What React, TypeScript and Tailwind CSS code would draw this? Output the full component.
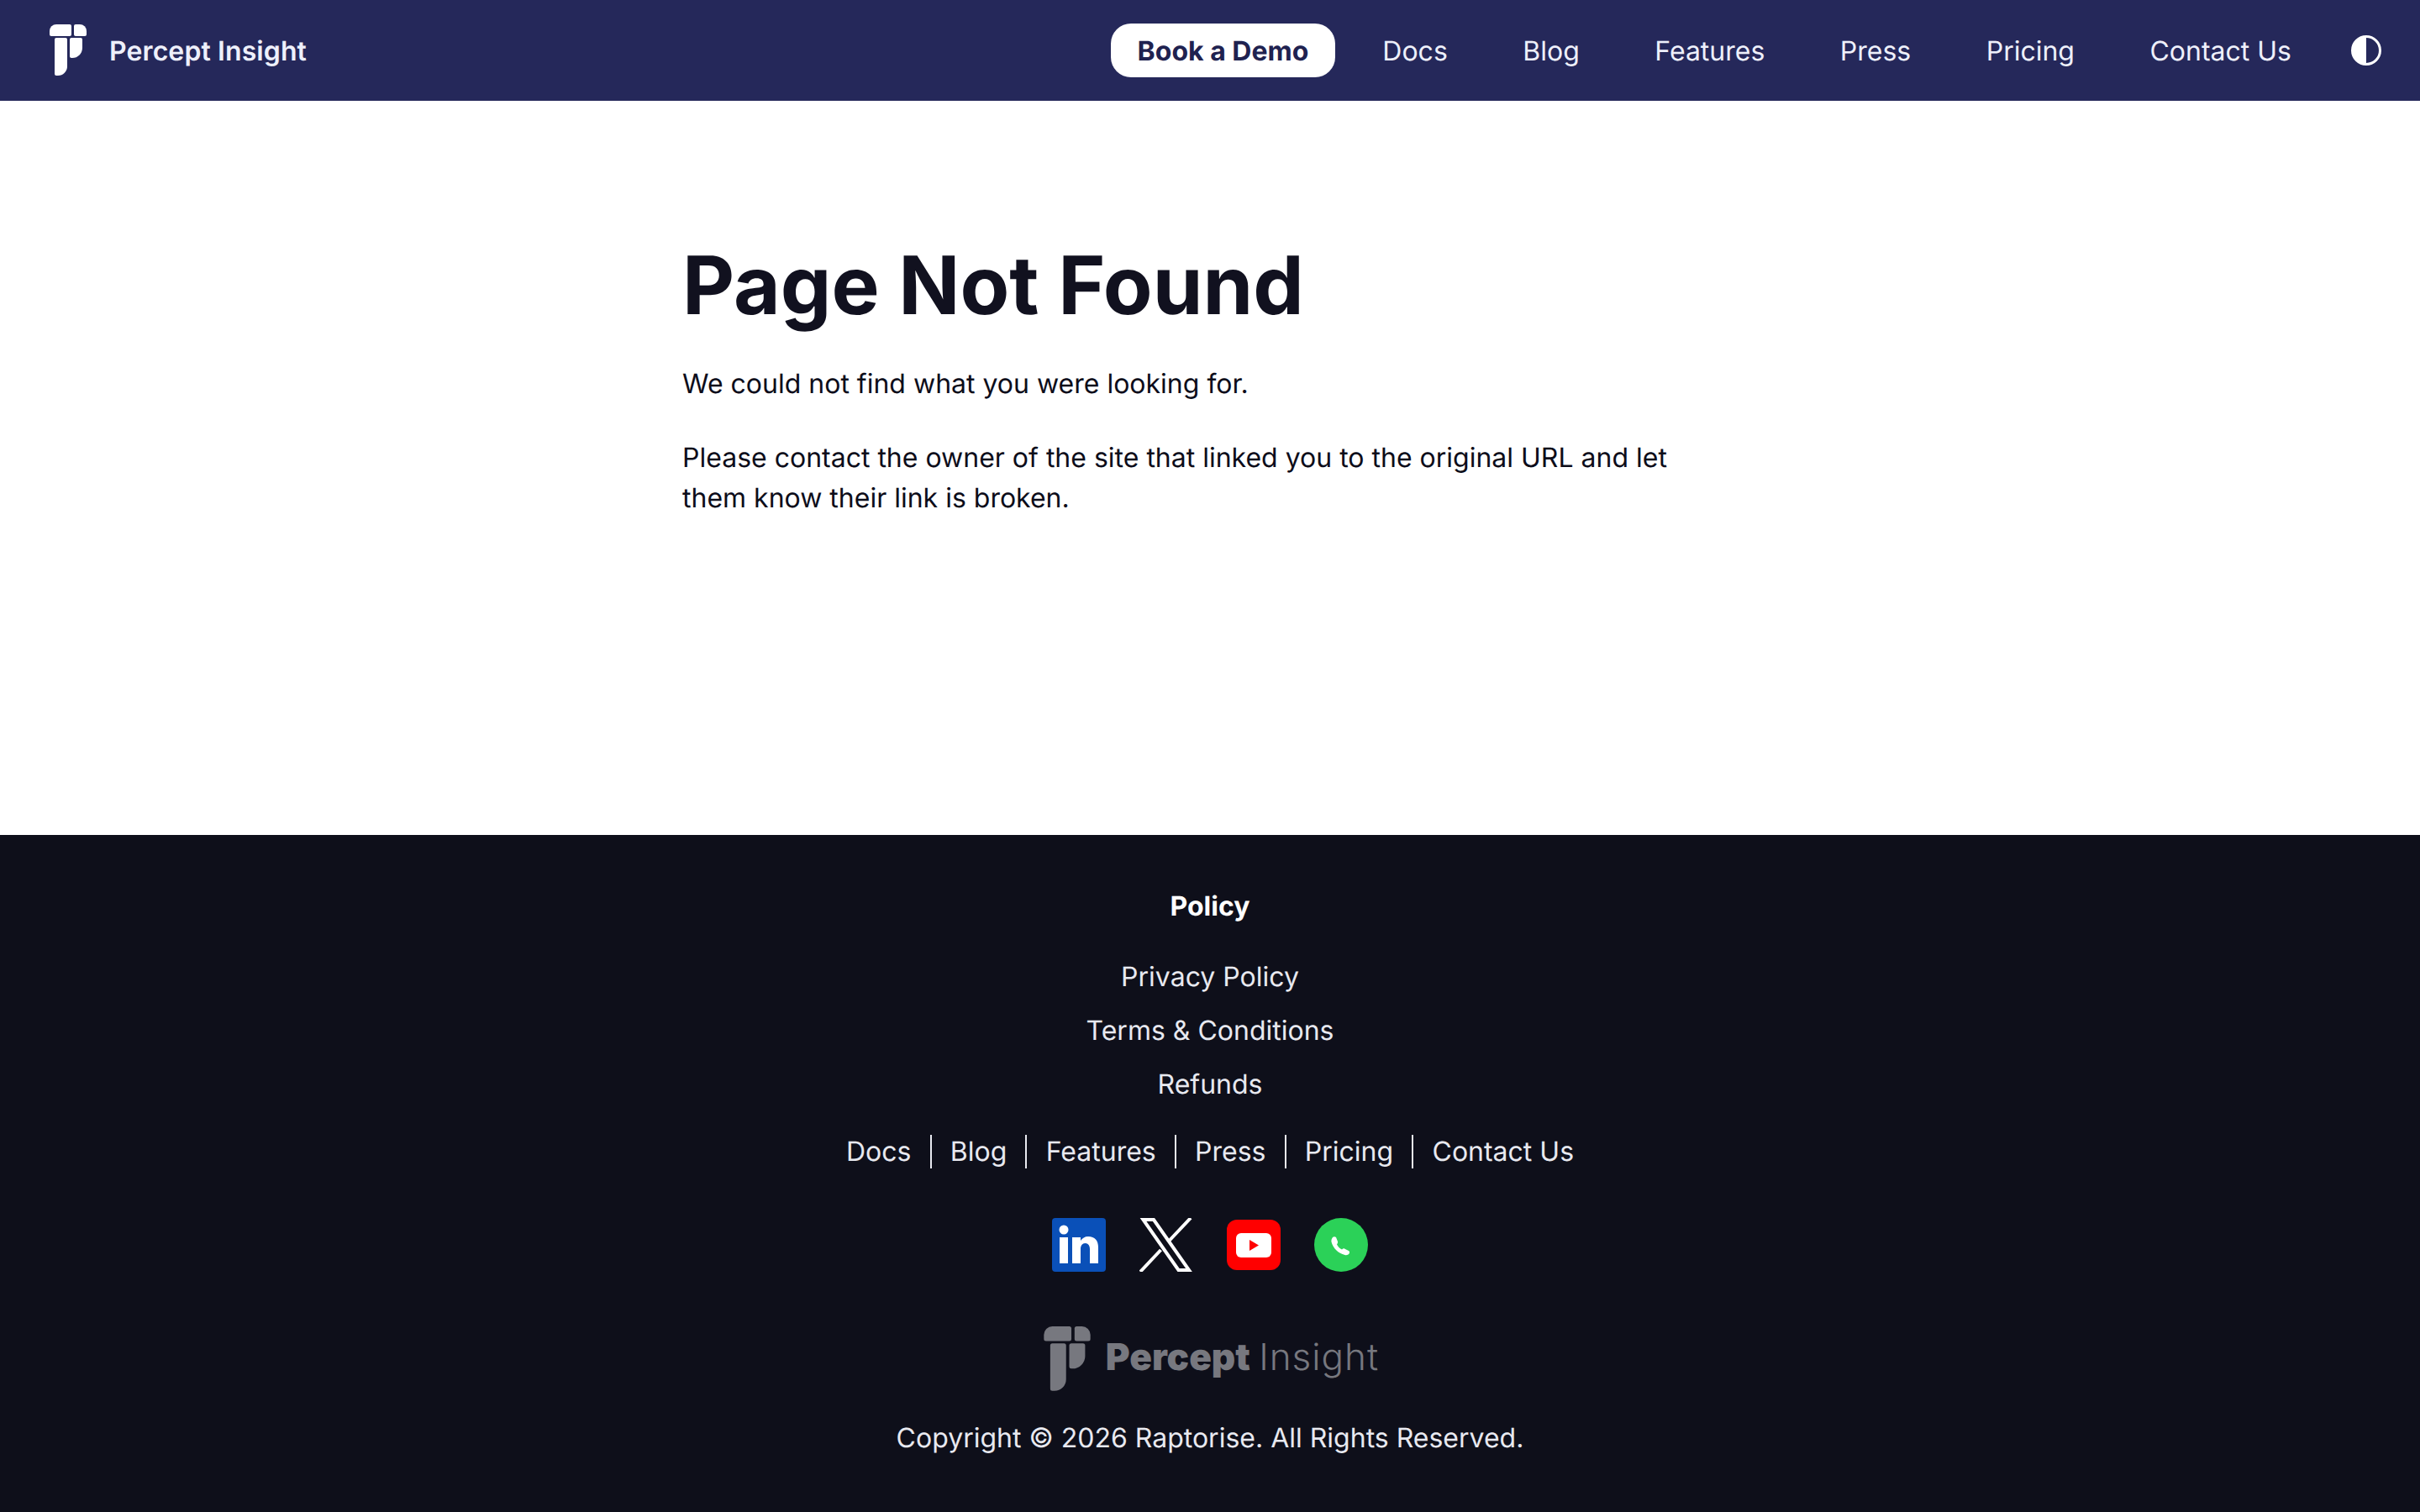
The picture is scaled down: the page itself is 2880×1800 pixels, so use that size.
const inter = "font-['Inter',sans-serif] [text-rendering:geometricPrecision] antialiased";

const navLinks = ['Docs', 'Blog', 'Features', 'Press', 'Pricing', 'Contact Us'];
const policyLinks = ['Privacy Policy', 'Terms & Conditions', 'Refunds'];

const LogoMark = ({ className, fill }: { className: string; fill: string }) => (
  <svg className={className} viewBox="0 0 44 62" fill={fill}>
    <path d="M8 0H24a2 2 0 0 1 2 2V12a2 2 0 0 1-2 2H2a2 2 0 0 1-2-2V8a8 8 0 0 1 8-8z" />
    <path d="M31 0H36a8 8 0 0 1 8 8V12a2 2 0 0 1-2 2H31a2 2 0 0 1-2-2V2a2 2 0 0 1 2-2z" />
    <path d="M8 16H19a2 2 0 0 1 2 2V50a11 11 0 0 1-11 11H8a2 2 0 0 1-2-2V18a2 2 0 0 1 2-2z" />
    <path d="M26 16H37a2 2 0 0 1 2 2V28a12 12 0 0 1-12 12H26a2 2 0 0 1-2-2V18a2 2 0 0 1 2-2z" />
  </svg>
);

const ThemeIcon = () => (
  <svg className="w-9 h-9" viewBox="0 0 36 36">
    <circle cx="18" cy="18" r="16.5" fill="none" stroke="#fff" strokeWidth="3" />
    <path d="M18 1.5a16.5 16.5 0 0 0 0 33z" fill="#fff" />
  </svg>
);

const LinkedinIcon = () => (
  <svg className="w-16 h-16" viewBox="0 0 64 64">
    <rect width="64" height="64" rx="4" fill="#0a50b8" />
    <circle cx="14" cy="14" r="5.5" fill="#fff" />
    <rect x="9" y="23" width="10" height="31" fill="#fff" />
    <path d="M24 23h10v4c2-3 5-5 9-5 8 0 12 5 12 13v19H45V37c0-4-2-7-5.5-7S34 33 34 37v17H24z" fill="#fff" />
  </svg>
);

const XIcon = () => (
  <svg className="w-16 h-16" viewBox="0 0 64 64" fill="none" stroke="#fff" strokeWidth="4">
    <path d="M4.500 2H17L59 62H46.500z" />
    <path d="M61 0L35 27.500M25.500 38L1 64" />
  </svg>
);

const YoutubeIcon = () => (
  <svg className="w-16 h-[60px]" viewBox="0 0 64 60">
    <rect width="64" height="60" rx="12" fill="#ff0000" />
    <rect x="11" y="16" width="42" height="29" rx="6" fill="#fff" />
    <path d="M27 24L38 30.500L27 37z" fill="#ff0000" />
  </svg>
);

const PhoneIcon = () => (
  <svg className="w-16 h-16" viewBox="0 0 64 64">
    <circle cx="32" cy="32" r="32" fill="#2bd158" />
    <path d="M22 23c1-1 3-1 4 0l2 5c.5 1-.5 2.500-1 3.500 1.500 3 3.500 5 6 6 1-.8 2-1.500 3-1l5 2.500c1 .5 1.500 2 .5 3.500-1 1.500-3 2-5 1.500-8-2-14-8-16-15.500-.4-2 .4-4 1.500-5.500z" fill="#fff" />
  </svg>
);

export default function App() {
  return (
    <div className={`${inter} min-h-screen flex flex-col bg-white`}>
      {/* Navbar */}
      <header className="h-[120px] bg-[#25285a] flex items-center justify-between pl-[59px] pr-[46px]">
        <div className="flex items-center gap-[27px]">
          <LogoMark className="w-11 h-[62px]" fill="#ffffff" />
          <span className="text-[32px] leading-[48px] pt-[2px] font-semibold tracking-[0.1px] text-[#eef0fb]">Percept Insight</span>
        </div>
        <nav className="flex items-center">
          <a className="h-16 px-8 mr-[56px] flex items-center rounded-3xl bg-white text-[32px] font-bold text-[#1f2250]">
            <span className="pt-[2px]">Book a Demo</span>
          </a>
          <div className="flex items-center gap-[89.5px] mr-[71px]">
            {navLinks.map((l) => (
              <a key={l} className="text-[32px] leading-[48px] pt-[2px] font-normal text-[#eef0fb]">{l}</a>
            ))}
          </div>
          <ThemeIcon />
        </nav>
      </header>

      {/* Contenido */}
      <main className="h-[874px] bg-white">
        <div className="w-[1256px] mx-auto pt-[160px]">
          <h1 className="text-[96px] leading-[120px] font-bold text-[#11111f] mb-[33px]">Page Not Found</h1>
          <p className="text-[32px] leading-[48px] text-[#0d0d1a] mb-[40px]">We could not find what you were looking for.</p>
          <p className="text-[32px] leading-[48px] text-[#0d0d1a] w-[1200px]">
            Please contact the owner of the site that linked you to the original URL and let them know their link is broken.
          </p>
        </div>
      </main>

      {/* Footer */}
      <footer className="h-[806px] bg-[#0e0f1a] flex flex-col items-center pt-[65px] text-[#e8e9f0]">
        <h2 className="text-[32px] leading-[40px] font-bold text-white mb-[40px]">Policy</h2>
        <ul className="flex flex-col items-center gap-[16px] mb-[36px]">
          {policyLinks.map((l) => (
            <li key={l} className="text-[32px] leading-[48px]">{l}</li>
          ))}
        </ul>
        <div className="flex items-center">
          {navLinks.map((l, i) => (
            <a key={l} className={`text-[32px] leading-[40px] px-[22.2px] ${i > 0 ? 'border-l-2 border-[#e8e9f0]' : ''}`}>{l}</a>
          ))}
        </div>
        <div className="flex items-center gap-[40px] mt-[59px]">
          <LinkedinIcon />
          <XIcon />
          <YoutubeIcon />
          <PhoneIcon />
        </div>
        <div className="flex items-center gap-[18px] mt-[65px] ml-[3px] text-[#77787f]">
          <LogoMark className="w-14 h-[78px]" fill="#77787f" />
          <span className="text-[44px] leading-[56px] pb-[6px]"><span className="font-black">Percept</span> <span className="font-light -ml-[2px] tracking-[1px]">Insight</span></span>
        </div>
        <p className="text-[32px] leading-[48px] mt-[31px]">Copyright © 2026 Raptorise. All Rights Reserved.</p>
      </footer>
    </div>
  );
}
